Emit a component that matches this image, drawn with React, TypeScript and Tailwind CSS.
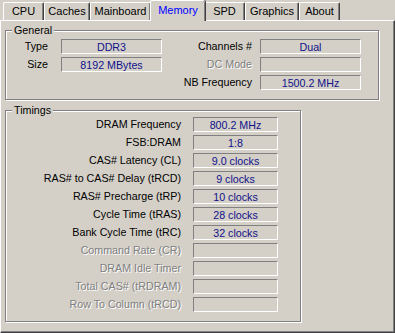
import React from "react";

const tabs = [
  { name: "CPU", w: "w-[41px]" },
  { name: "Caches", w: "w-[46px]" },
  { name: "Mainboard", w: "w-[61px]" },
  { name: "Memory", w: "w-[55px]", active: true },
  { name: "SPD", w: "w-[41px]" },
  { name: "Graphics", w: "w-[54px]" },
  { name: "About", w: "w-[41px]" },
];

const timings = [
  { label: "DRAM Frequency", value: "800.2 MHz" },
  { label: "FSB:DRAM", value: "1:8" },
  { label: "CAS# Latency (CL)", value: "9.0 clocks" },
  { label: "RAS# to CAS# Delay (tRCD)", value: "9 clocks" },
  { label: "RAS# Precharge (tRP)", value: "10 clocks" },
  { label: "Cycle Time (tRAS)", value: "28 clocks" },
  { label: "Bank Cycle Time (tRC)", value: "32 clocks" },
  { label: "Command Rate (CR)", value: "", disabled: true },
  { label: "DRAM Idle Timer", value: "", disabled: true },
  { label: "Total CAS# (tRDRAM)", value: "", disabled: true },
  { label: "Row To Column (tRCD)", value: "", disabled: true },
];

const Field = ({ value, w }: { value: string; w: string }) => (
  <div
    className={`${w} h-[15px] border border-t-[#808080] border-l-[#808080] border-b-white border-r-white text-center leading-[14px] text-[#10108a]`}
  >
    {value}
  </div>
);

const Label = ({ text, w, disabled }: { text: string; w: string; disabled?: boolean }) => (
  <div
    className={`${w} text-right whitespace-nowrap leading-[15px] ${
      disabled ? "text-[#808080] [text-shadow:1px_1px_0_#fff]" : "text-black"
    }`}
  >
    {text}
  </div>
);

const Group = ({ title, className, children }: { title: string; className: string; children: React.ReactNode }) => (
  <div
    className={`relative border border-[#808080] shadow-[inset_1px_1px_0_#fff,1px_1px_0_#fff] ${className}`}
  >
    <span className="absolute left-[6px] top-[-7px] bg-[#d4d0c8] px-[2px] leading-[13px] text-black">
      {title}
    </span>
    {children}
  </div>
);

export default function App() {
  return (
    <div
      className="w-[395px] h-[333px] bg-[#d4d0c8] flex flex-col text-[10.7px] leading-[13px] overflow-hidden"
      style={{ fontFamily: '"Liberation Sans", Arial, sans-serif' }}
    >
      {/* tab strip */}
      <div className="flex items-end h-[20px] pl-[3px] relative z-10 text-[11px]">
        {tabs.map((t) =>
          t.active ? (
            <div
              key={t.name}
              className={`${t.w} -mx-[1px] h-[21px] -mb-[1px] bg-[#d4d0c8] border-t border-l border-white rounded-t-[2px] shadow-[inset_-1px_0_0_#808080,1px_0_0_#404040] flex items-center justify-center pb-[1px] text-[#0000ff] relative z-20`}
            >
              {t.name}
            </div>
          ) : (
            <div
              key={t.name}
              className={`${t.w} h-[18px] bg-[#d4d0c8] border-t border-l border-white rounded-t-[2px] shadow-[inset_-1px_0_0_#808080] border-r border-r-[#404040] flex items-center justify-center text-black`}
            >
              {t.name}
            </div>
          )
        )}
      </div>

      {/* panel */}
      <div className="flex-1 border-t border-l border-white border-r border-b border-r-[#404040] border-b-[#404040] shadow-[inset_-1px_-1px_0_#808080] pt-[9px]">
        <Group title="General" className="ml-[4px] w-[374px] h-[70px] pt-[8px] flex">
          <div className="flex flex-col gap-[3px]">
            <div className="flex items-center">
              <Label text="Type" w="w-[42px]" />
              <div className="ml-[13px]">
                <Field value="DDR3" w="w-[101px]" />
              </div>
            </div>
            <div className="flex items-center">
              <Label text="Size" w="w-[42px]" />
              <div className="ml-[13px]">
                <Field value="8192 MBytes" w="w-[101px]" />
              </div>
            </div>
          </div>
          <div className="flex flex-col gap-[3px]">
            <div className="flex items-center">
              <Label text="Channels #" w="w-[90px]" />
              <div className="ml-[8px]">
                <Field value="Dual" w="w-[101px]" />
              </div>
            </div>
            <div className="flex items-center">
              <Label text="DC Mode" w="w-[90px]" disabled />
              <div className="ml-[8px]">
                <Field value="" w="w-[101px]" />
              </div>
            </div>
            <div className="flex items-center">
              <Label text="NB Frequency" w="w-[90px]" />
              <div className="ml-[8px]">
                <Field value="1500.2 MHz" w="w-[101px]" />
              </div>
            </div>
          </div>
        </Group>

        <Group title="Timings" className="ml-[4px] mt-[10px] w-[296px] h-[212px] pt-[6px]">
          <div className="flex flex-col gap-[3px]">
            {timings.map((r) => (
              <div key={r.label} className="flex items-center">
                <Label text={r.label} w="w-[175px]" disabled={r.disabled} />
                <div className="ml-[12px]">
                  <Field value={r.value} w="w-[85px]" />
                </div>
              </div>
            ))}
          </div>
        </Group>
      </div>
    </div>
  );
}
